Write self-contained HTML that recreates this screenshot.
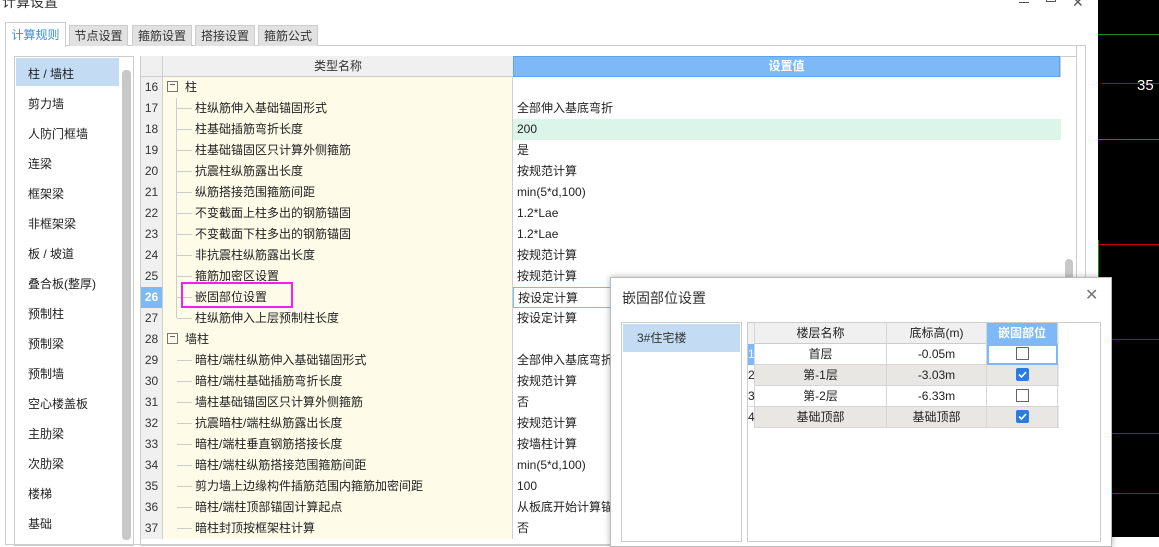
<!DOCTYPE html>
<html><head><meta charset="utf-8"><style>
*{margin:0;padding:0;box-sizing:border-box}
body{width:1159px;height:537px;overflow:hidden;position:relative;background:#fff;font-family:"Liberation Sans","Noto Sans CJK SC",sans-serif;font-size:12px;color:#222}
.a{position:absolute}
.tab{position:absolute;top:25px;height:21px;background:#e1e1e1;border:1px solid #ccc;border-bottom:none;font-size:12px;line-height:20px;text-align:center;color:#333}
.li{position:absolute;left:28px;font-size:12px;color:#222}
.row{position:absolute;left:141px;width:920px;height:21px;border-bottom:1px solid #d6d6d6;line-height:20px}
.rn{position:absolute;left:0;width:22px;height:21px;background:#f0f0f0;border-right:1px solid #d0d0d0;text-align:center;color:#333}
.nm{position:absolute;left:22px;width:350px;height:21px;background:#fefbe8;border-right:1px solid #d0d0d0}
.vl{position:absolute;left:372px;width:548px;height:21px;padding-left:4px;background:#fff}
.tr{position:absolute;top:10px;left:14px;width:15px;border-top:1px solid #ccc}
.vt{position:absolute;left:13px;border-left:1px solid #ccc}
.bx{position:absolute;left:4px;top:4px;width:11px;height:11px;border:1px solid #777;font-size:10px;line-height:8px;text-align:center}
.dr{position:absolute;left:748px;width:311px;height:21px;border-bottom:1px solid #d6d6d6;line-height:20px;text-align:center}
.dr div{position:absolute;top:0;height:21px;border-right:1px solid #d6d6d6}
.cb{position:absolute;left:1016px;width:13px;height:13px;border:1px solid #666;background:#fff}
.cbk{background:#2a7ce0;border-color:#2a7ce0;border-radius:2px}
</style></head><body>
<div class="a" style="left:1098px;top:0;width:61px;height:537px;background:#000"></div>
<div class="a" style="left:1098px;top:34px;width:61px;height:1px;background:#1a8a1a"></div>
<div class="a" style="left:1102px;top:83px;width:57px;height:1px;background:#c00"></div>
<div class="a" style="left:1137px;top:77px;color:#fff;font-size:15px">35</div>
<div class="a" style="left:1098px;top:139px;width:61px;height:1px;background:#1a8a1a"></div>
<div class="a" style="left:1098px;top:244px;width:61px;height:1px;background:#c00"></div>
<div class="a" style="left:1098px;top:240px;width:1px;height:40px;background:#1a8a1a"></div>
<div class="a" style="left:1112px;top:339px;width:47px;height:1px;background:#c00"></div>
<div class="a" style="left:1112px;top:433px;width:47px;height:1px;background:#c00"></div>
<div class="a" style="left:1112px;top:493px;width:47px;height:1px;background:#c00"></div>

<div class="a" style="left:2px;top:-8px;font-size:14px;color:#333">计算设置</div>
<div class="a" style="left:1019px;top:2px;width:10px;height:1px;background:#555"></div>
<div class="a" style="left:1046px;top:-3px;width:10px;height:5px;border:1px solid #555"></div>
<div class="a" style="left:1072px;top:-6px;font-size:14px;color:#555">✕</div>

<div class="a" style="left:5px;top:45px;width:1081px;height:500px;border:1px solid #ccc"></div>
<div class="tab" style="left:5px;top:22px;width:61px;height:25px;background:#fff;color:#3a8ee6;line-height:24px">计算规则</div>
<div class="tab" style="left:69px;width:59px">节点设置</div>
<div class="tab" style="left:132px;width:60px">箍筋设置</div>
<div class="tab" style="left:195px;width:60px">搭接设置</div>
<div class="tab" style="left:258px;width:60px">箍筋公式</div>

<div class="a" style="left:14px;top:56px;width:120px;height:490px;border:1px solid #ccc"></div>
<div class="a" style="left:16px;top:58px;width:103px;height:28px;background:#c3dcf3"></div>
<div class="a" style="left:122px;top:70px;width:9px;height:470px;background:#c8c8c8;border-radius:4px"></div>
<div class="li" style="top:65px">柱 / 墙柱</div>
<div class="li" style="top:95px">剪力墙</div>
<div class="li" style="top:125px">人防门框墙</div>
<div class="li" style="top:155px">连梁</div>
<div class="li" style="top:185px">框架梁</div>
<div class="li" style="top:215px">非框架梁</div>
<div class="li" style="top:245px">板 / 坡道</div>
<div class="li" style="top:275px">叠合板(整厚)</div>
<div class="li" style="top:305px">预制柱</div>
<div class="li" style="top:335px">预制梁</div>
<div class="li" style="top:365px">预制墙</div>
<div class="li" style="top:395px">空心楼盖板</div>
<div class="li" style="top:425px">主肋梁</div>
<div class="li" style="top:455px">次肋梁</div>
<div class="li" style="top:485px">楼梯</div>
<div class="li" style="top:515px">基础</div>

<div class="a" style="left:140px;top:56px;width:937px;height:490px;border:1px solid #ccc"></div>
<div class="a" style="left:1076px;top:46px;width:1px;height:500px;background:#ccc"></div>
<div class="a" style="left:1060px;top:56px;width:1px;height:490px;background:#ccc"></div>
<div class="a" style="left:1065px;top:259px;width:8px;height:30px;background:#c8c8c8;border-radius:4px"></div>
<div class="a" style="left:141px;top:56px;width:22px;height:21px;background:#f0f0f0;border-right:1px solid #d0d0d0;border-bottom:1px solid #ccc"></div>
<div class="a" style="left:163px;top:56px;width:350px;height:21px;background:#f0f0f0;border-bottom:1px solid #ccc;text-align:center;line-height:21px;color:#333">类型名称</div>
<div class="a" style="left:513px;top:56px;width:547px;height:21px;background:#7db9f7;border:1px solid #5fa3ee;text-align:center;line-height:19px;color:#fff;font-weight:bold">设置值</div>

<div class="row" style="top:77px"><div class="rn">16</div><div class="nm"><div class="bx">−</div><span style="position:absolute;left:22px">柱</span></div><div class="vl"></div></div>
<div class="row" style="top:98px"><div class="rn">17</div><div class="nm"><div class="vt" style="top:0;height:21px"></div><div class="tr"></div><span style="position:absolute;left:32px">柱纵筋伸入基础锚固形式</span></div><div class="vl">全部伸入基底弯折</div></div>
<div class="row" style="top:119px"><div class="rn">18</div><div class="nm"><div class="vt" style="top:0;height:21px"></div><div class="tr"></div><span style="position:absolute;left:32px">柱基础插筋弯折长度</span></div><div class="vl" style="background:#dcf5ea">200</div></div>
<div class="row" style="top:140px"><div class="rn">19</div><div class="nm"><div class="vt" style="top:0;height:21px"></div><div class="tr"></div><span style="position:absolute;left:32px">柱基础锚固区只计算外侧箍筋</span></div><div class="vl">是</div></div>
<div class="row" style="top:161px"><div class="rn">20</div><div class="nm"><div class="vt" style="top:0;height:21px"></div><div class="tr"></div><span style="position:absolute;left:32px">抗震柱纵筋露出长度</span></div><div class="vl">按规范计算</div></div>
<div class="row" style="top:182px"><div class="rn">21</div><div class="nm"><div class="vt" style="top:0;height:21px"></div><div class="tr"></div><span style="position:absolute;left:32px">纵筋搭接范围箍筋间距</span></div><div class="vl">min(5*d,100)</div></div>
<div class="row" style="top:203px"><div class="rn">22</div><div class="nm"><div class="vt" style="top:0;height:21px"></div><div class="tr"></div><span style="position:absolute;left:32px">不变截面上柱多出的钢筋锚固</span></div><div class="vl">1.2*Lae</div></div>
<div class="row" style="top:224px"><div class="rn">23</div><div class="nm"><div class="vt" style="top:0;height:21px"></div><div class="tr"></div><span style="position:absolute;left:32px">不变截面下柱多出的钢筋锚固</span></div><div class="vl">1.2*Lae</div></div>
<div class="row" style="top:245px"><div class="rn">24</div><div class="nm"><div class="vt" style="top:0;height:21px"></div><div class="tr"></div><span style="position:absolute;left:32px">非抗震柱纵筋露出长度</span></div><div class="vl">按规范计算</div></div>
<div class="row" style="top:266px"><div class="rn">25</div><div class="nm"><div class="vt" style="top:0;height:21px"></div><div class="tr"></div><span style="position:absolute;left:32px">箍筋加密区设置</span></div><div class="vl">按规范计算</div></div>
<div class="row" style="top:287px"><div class="rn" style="background:#7db9f7;color:#fff;font-weight:bold">26</div><div class="nm"><div class="vt" style="top:0;height:21px"></div><div class="tr"></div><span style="position:absolute;left:32px">嵌固部位设置</span></div><div class="vl" style="border:1px solid #7db9f7">按设定计算</div></div>
<div class="row" style="top:308px"><div class="rn">27</div><div class="nm"><div class="vt" style="top:0;height:10px"></div><div class="tr"></div><span style="position:absolute;left:32px">柱纵筋伸入上层预制柱长度</span></div><div class="vl">按设定计算</div></div>
<div class="row" style="top:329px"><div class="rn">28</div><div class="nm"><div class="bx">−</div><span style="position:absolute;left:22px">墙柱</span></div><div class="vl"></div></div>
<div class="row" style="top:350px"><div class="rn">29</div><div class="nm"><div class="tr"></div><span style="position:absolute;left:32px">暗柱/端柱纵筋伸入基础锚固形式</span></div><div class="vl">全部伸入基底弯折</div></div>
<div class="row" style="top:371px"><div class="rn">30</div><div class="nm"><div class="tr"></div><span style="position:absolute;left:32px">暗柱/端柱基础插筋弯折长度</span></div><div class="vl">按规范计算</div></div>
<div class="row" style="top:392px"><div class="rn">31</div><div class="nm"><div class="tr"></div><span style="position:absolute;left:32px">墙柱基础锚固区只计算外侧箍筋</span></div><div class="vl">否</div></div>
<div class="row" style="top:413px"><div class="rn">32</div><div class="nm"><div class="tr"></div><span style="position:absolute;left:32px">抗震暗柱/端柱纵筋露出长度</span></div><div class="vl">按规范计算</div></div>
<div class="row" style="top:434px"><div class="rn">33</div><div class="nm"><div class="tr"></div><span style="position:absolute;left:32px">暗柱/端柱垂直钢筋搭接长度</span></div><div class="vl">按墙柱计算</div></div>
<div class="row" style="top:455px"><div class="rn">34</div><div class="nm"><div class="tr"></div><span style="position:absolute;left:32px">暗柱/端柱纵筋搭接范围箍筋间距</span></div><div class="vl">min(5*d,100)</div></div>
<div class="row" style="top:476px"><div class="rn">35</div><div class="nm"><div class="tr"></div><span style="position:absolute;left:32px">剪力墙上边缘构件插筋范围内箍筋加密间距</span></div><div class="vl">100</div></div>
<div class="row" style="top:497px"><div class="rn">36</div><div class="nm"><div class="tr"></div><span style="position:absolute;left:32px">暗柱/端柱顶部锚固计算起点</span></div><div class="vl">从板底开始计算锚固</div></div>
<div class="row" style="top:518px"><div class="rn">37</div><div class="nm"><div class="tr"></div><span style="position:absolute;left:32px">暗柱封顶按框架柱计算</span></div><div class="vl">否</div></div>
<div class="a" style="left:181px;top:282px;width:112px;height:26px;border:2px solid #ee22ee"></div>

<!-- dialog -->
<div class="a" style="left:610px;top:277px;width:502px;height:270px;background:#fff;border:1px solid #bbb;box-shadow:0 0 6px rgba(0,0,0,.3)"></div>
<div class="a" style="left:622px;top:288px;font-size:14px;color:#333">嵌固部位设置</div>
<div class="a" style="left:1085px;top:285px;font-size:16px;color:#777">✕</div>
<div class="a" style="left:621px;top:322px;width:121px;height:220px;border:1px solid #ccc"></div>
<div class="a" style="left:623px;top:324px;width:117px;height:28px;background:#c3dcf3;line-height:28px;padding-left:14px;color:#333">3#住宅楼</div>
<div class="a" style="left:747px;top:322px;width:354px;height:220px;border:1px solid #ccc"></div>
<div class="dr" style="top:323px;background:#f0f0f0;border-bottom:1px solid #ccc"><div style="left:0;width:7px;background:#f0f0f0"></div><div style="left:7px;width:132px">楼层名称</div><div style="left:139px;width:100px">底标高(m)</div><div style="left:239px;width:71px;background:#7db9f7;color:#fff;font-weight:bold">嵌固部位</div></div>
<div class="dr" style="top:344px"><div style="left:0;width:7px;background:#7db9f7;color:#fff;text-align:left">1</div><div style="left:7px;width:132px">首层</div><div style="left:139px;width:100px">-0.05m</div><div style="left:239px;width:71px;border:2px solid #7db9f7"></div></div>
<div class="dr" style="top:365px;background:#e8e7e3"><div style="left:0;width:7px;text-align:left;background:#fff">2</div><div style="left:7px;width:132px">第-1层</div><div style="left:139px;width:100px">-3.03m</div><div style="left:239px;width:71px"></div></div>
<div class="dr" style="top:386px"><div style="left:0;width:7px;text-align:left">3</div><div style="left:7px;width:132px">第-2层</div><div style="left:139px;width:100px">-6.33m</div><div style="left:239px;width:71px"></div></div>
<div class="dr" style="top:407px;background:#e8e7e3"><div style="left:0;width:7px;text-align:left;background:#fff">4</div><div style="left:7px;width:132px">基础顶部</div><div style="left:139px;width:100px">基础顶部</div><div style="left:239px;width:71px"></div></div>
<div class="cb" style="top:347px"></div>
<div class="cb cbk" style="top:368px"><svg width="11" height="11" viewBox="0 0 11 11" style="position:absolute;left:0;top:0"><path d="M2 5.5 L4.5 8 L9 3" stroke="#fff" stroke-width="1.6" fill="none"/></svg></div>
<div class="cb" style="top:389px"></div>
<div class="cb cbk" style="top:410px"><svg width="11" height="11" viewBox="0 0 11 11" style="position:absolute;left:0;top:0"><path d="M2 5.5 L4.5 8 L9 3" stroke="#fff" stroke-width="1.6" fill="none"/></svg></div>
</body></html>
